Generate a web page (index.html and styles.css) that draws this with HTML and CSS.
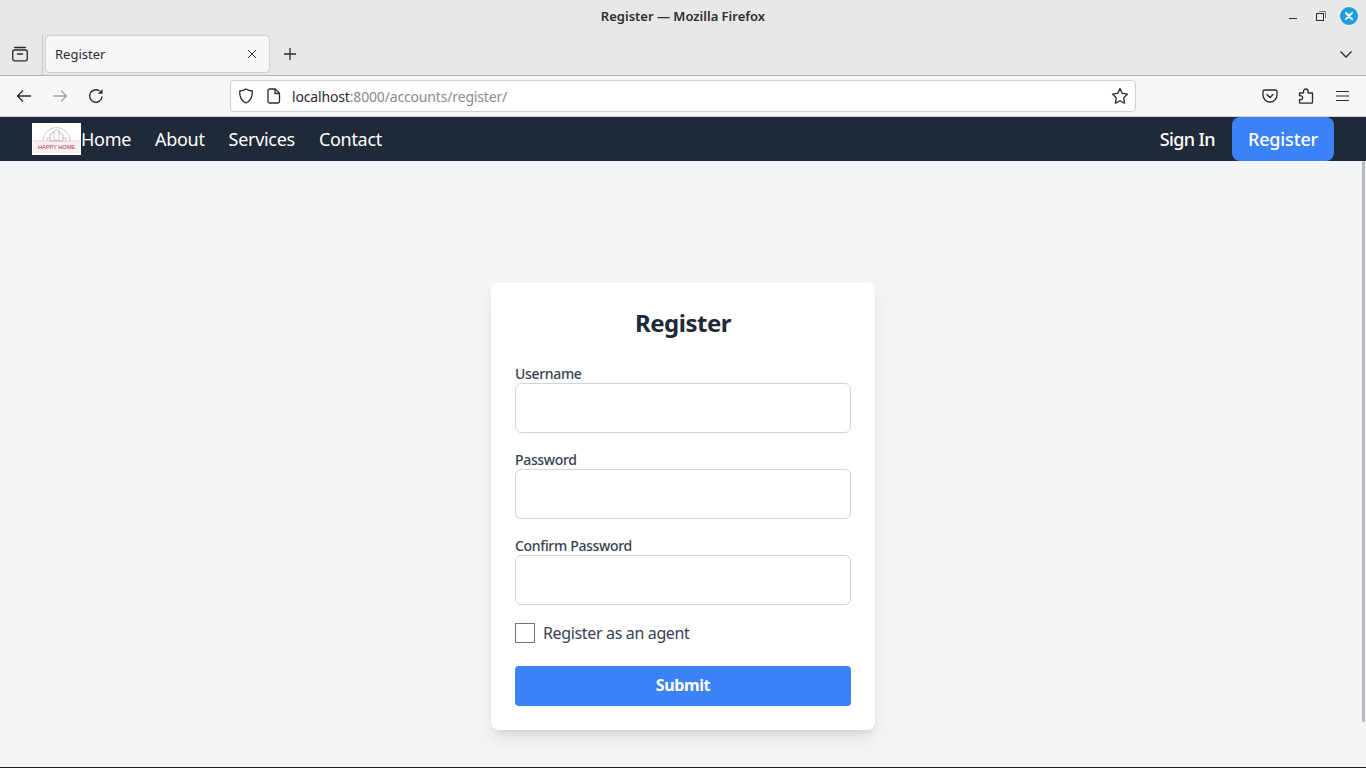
FILE: index.html
```html
<!DOCTYPE html>
<html lang="en">
<head>
<meta charset="utf-8">
<title>Register</title>
<link rel="stylesheet" href="styles.css">
</head>
<body>
<div class="chrome">
  <div class="titlebar">
    <span class="window-title">Register — Mozilla Firefox</span>
    <div class="window-controls">
      <svg class="wc" width="16" height="16" viewBox="0 0 16 16"><path d="M5 10.500h8" stroke="#2b2b2b" stroke-width="1"/></svg>
      <svg class="wc" width="16" height="16" viewBox="0 0 16 16" fill="none"><rect x="4.500" y="5.500" width="7" height="7" stroke="#2b2b2b"/><path d="M7 3.500h6.500v6.500" stroke="#777"/></svg>
      <svg class="wc" width="18" height="18" viewBox="0 0 18 18"><circle cx="9" cy="9" r="9" fill="#1c9fdc"/><path d="M6 6l6 6M12 6l-6 6" stroke="#fff" stroke-width="2" stroke-linecap="round"/></svg>
    </div>
  </div>
  <div class="tabrow">
    <div class="tabs-left">
      <svg width="16" height="16" viewBox="0 0 16 16" fill="none" stroke="#2b2a33" stroke-width="1.300"><rect x="0.700" y="4" width="14.600" height="10.800" rx="2"/><path d="M2.500 1.500h11M5.500 8h5" stroke-linecap="round"/></svg>
    </div>
    <div class="tab">
      <span class="tab-title">Register</span>
      <svg width="10" height="10" viewBox="0 0 10 10"><path d="M1 1l8 8M9 1l-8 8" stroke="#2b2a33" stroke-width="1"/></svg>
    </div>
    <svg class="newtab" width="14" height="14" viewBox="0 0 14 14"><path d="M7 1v12M1 7h12" stroke="#2b2a33" stroke-width="1.300"/></svg>
    <svg class="tabs-down" width="14" height="14" viewBox="0 0 14 14" fill="none"><path d="M1.500 4.500L7 10l5.500-5.500" stroke="#2b2a33" stroke-width="1.300"/></svg>
  </div>
  <div class="toolbar">
    <div class="nav-buttons">
      <svg width="16" height="16" viewBox="0 0 16 16" fill="none" stroke="#2b2a33" stroke-width="1.300"><path d="M15 8H1.500M7 2.500L1.500 8 7 13.500"/></svg>
      <svg width="16" height="16" viewBox="0 0 16 16" fill="none" stroke="#a5a5a9" stroke-width="1.300"><path d="M1 8h13.500M9 2.500L14.500 8 9 13.500"/></svg>
      <svg width="16" height="16" viewBox="0 0 16 16" fill="none" stroke="#2b2a33" stroke-width="1.400"><path d="M14 8.500A6.200 6.200 0 1 1 11.500 3"/><path d="M14.500 1v4.700H9.800" fill="#2b2a33" stroke="none"/></svg>
    </div>
    <div class="urlbar">
      <svg width="16" height="16" viewBox="0 0 16 16" fill="none" stroke="#2b2a33" stroke-width="1.300"><path d="M8 1c2 1.300 4 1.900 6.300 2 .3 5.500-1.600 9.800-6.300 12C3.300 12.800 1.400 8.500 1.700 3 4 2.900 6 2.300 8 1z"/></svg>
      <svg class="page-icon" width="14" height="16" viewBox="0 0 14 16" fill="none" stroke="#2b2a33" stroke-width="1.300"><path d="M2.800 1h5.400L12.500 5.300v7.900A1.800 1.800 0 0 1 10.700 15H2.800A1.800 1.800 0 0 1 1 13.200V2.800A1.800 1.800 0 0 1 2.800 1z"/><path d="M8 1v4.500h4.500"/></svg>
      <span class="url"><span class="url-host">localhost</span>:8000/accounts/register/</span>
      <svg class="star" width="18" height="18" viewBox="0 0 18 18" fill="none" stroke="#2b2a33" stroke-width="1.300" stroke-linejoin="round"><path d="M9 1.500l2.300 4.900 5.200.7-3.800 3.700.9 5.400L9 13.700l-4.600 2.500.9-5.400L1.500 7.100l5.200-.7z"/></svg>
    </div>
    <div class="tool-actions">
      <svg width="16" height="16" viewBox="0 0 16 16" fill="none" stroke="#2b2a33" stroke-width="1.300"><path d="M2.500 2h11A1.500 1.500 0 0 1 15 3.500V7a7 7 0 0 1-14 0V3.500A1.500 1.500 0 0 1 2.500 2z"/><path d="M5 6.500l3 3 3-3" stroke-linecap="round"/></svg>
      <svg width="16" height="16" viewBox="0 0 16 16" fill="none" stroke="#2b2a33" stroke-width="1.300" stroke-linejoin="round"><path d="M1.500 5h3.300C5.800 5 5.500 4.200 5.500 3.300a2.300 2.300 0 0 1 4.600 0c0 .9-.4 1.700.6 1.700h3.800v9.300a.9.900 0 0 1-.9.900H2.400a.9.900 0 0 1-.9-.9v-2.800c1.700.5 3.200-.2 3.200-1.700S3.200 7.300 1.500 7.900z"/></svg>
      <svg width="16" height="16" viewBox="0 0 16 16" stroke="#2b2a33" stroke-width="1.200"><path d="M2 3.500h13M2 8h13M2 12.500h13"/></svg>
    </div>
  </div>
</div>
<div class="page">
  <nav class="site-nav">
    <div class="logo">
      <svg width="49" height="32" viewBox="0 0 49 32" fill="none">
        <rect x="1" y="18" width="47" height="12" fill="#f7eff1"/>
        <path d="M11 18a13.500 13.500 0 0 1 27 0" stroke="#c9a9b0" stroke-width="0.700"/>
        <path d="M18 18v-6l6.500-5.500L31 12v6z" stroke="#b99ca6" stroke-width="0.800"/>
        <path d="M22 8v9h5V8M15 18v-3h4M30 15h4v3" stroke="#cdb4ba" stroke-width="0.800"/>
        <path d="M1 18h47" stroke="#d9b9c0" stroke-width="0.600"/>
      </svg>
      <span class="logo-text">HAPPY HOME</span>
    </div>
    <div class="nav-links">
      <a class="nav-link">Home</a>
      <a class="nav-link">About</a>
      <a class="nav-link">Services</a>
      <a class="nav-link">Contact</a>
    </div>
    <div class="nav-auth">
      <a class="sign-in">Sign In</a>
      <a class="register-btn">Register</a>
    </div>
  </nav>
  <main class="main">
    <form class="card">
      <h1 class="card-title">Register</h1>
      <div class="field">
        <label class="field-label">Username</label>
        <input class="field-input" type="text">
      </div>
      <div class="field">
        <label class="field-label">Password</label>
        <input class="field-input" type="password">
      </div>
      <div class="field">
        <label class="field-label">Confirm Password</label>
        <input class="field-input" type="password">
      </div>
      <div class="check-row">
        <span class="check-box"></span>
        <span class="check-label">Register as an agent</span>
      </div>
      <button class="submit" type="button">Submit</button>
    </form>
  </main>
  <div class="scrollbar"></div>
</div>
</body>
</html>
```
FILE: styles.css
```css
* { box-sizing: border-box; }
html, body { margin: 0; padding: 0; height: 100%; overflow: hidden; }
body {
  width: 1366px;
  height: 768px;
  font-family: "Noto Sans", sans-serif;
  background: #f3f4f6;
  display: flex;
  flex-direction: column;
  border-bottom: 1px solid #1f1f1f;
}
svg { display: block; flex: none; }

.chrome { flex: none; }
.titlebar {
  height: 33px;
  background: #e8e8e8;
  position: relative;
  display: flex;
  align-items: center;
  justify-content: center;
  padding-bottom: 2px;
}
.window-title { font-size: 13px; font-weight: 600; color: #2d2d2d; }
.window-controls {
  position: absolute;
  right: 8px;
  top: 7px;
  display: flex;
  align-items: center;
  gap: 12px;
}
.tabrow {
  height: 43px;
  background: #e8e8e8;
  border-bottom: 1px solid #b5b5b5;
  display: flex;
  align-items: center;
}
.tabs-left {
  width: 43px;
  height: 100%;
  padding-left: 12px;
  border-right: 1px solid #c8c8c8;
  display: flex;
  align-items: center;
}
.tab {
  width: 223px;
  height: 36px;
  margin-left: 3px;
  padding: 0 12px 0 9px;
  background: #f7f7f7;
  border-radius: 4px;
  box-shadow: 0 0 2px rgba(0, 0, 0, 0.35);
  display: flex;
  align-items: center;
  justify-content: space-between;
}
.tab-title { font-size: 13px; color: #2b2a33; }
.newtab { margin-left: 14px; }
.tabs-down { margin: 0 13px 0 auto; }

.toolbar {
  height: 41px;
  background: #f7f7f7;
  border-bottom: 1px solid #cfcfd3;
  display: flex;
  align-items: center;
}
.nav-buttons {
  width: 230px;
  padding-left: 16px;
  display: flex;
  gap: 20px;
}
.urlbar {
  width: 906px;
  height: 32px;
  background: #fff;
  border: 1px solid #cfcfd8;
  border-radius: 4px;
  padding: 0 6px 0 7px;
  display: flex;
  align-items: center;
}
.page-icon { margin-left: 13px; }
.url { margin-left: 11px; font-size: 14px; letter-spacing: -0.16px; color: #8a8a8f; flex: 1; }
.url-host { color: #2b2a33; }
.tool-actions {
  margin-left: 126px;
  display: flex;
  gap: 20px;
}

.page { flex: 1; position: relative; display: flex; flex-direction: column; min-height: 0; }
.site-nav {
  height: 44px;
  flex: none;
  background: #1f2937;
  padding: 0 32px;
  display: flex;
  align-items: center;
}
.logo {
  width: 49px;
  height: 32px;
  background: #fff;
  position: relative;
}
.logo-text {
  position: absolute;
  left: 0;
  right: 0;
  top: 21px;
  text-align: center;
  font-size: 5.600px;
  line-height: 7px;
  color: #b3394f;
  font-family: "Liberation Sans", sans-serif;
}
.nav-links { display: flex; gap: 24px; }
.nav-link { font-size: 18px; letter-spacing: -0.3px; color: #fff; }
.nav-auth { margin-left: auto; display: flex; align-items: center; gap: 17px; }
.sign-in { font-size: 18px; font-weight: 500; letter-spacing: -0.6px; color: #fff; }
.register-btn {
  width: 102px;
  height: 44px;
  background: #3b82f6;
  border-radius: 8px;
  font-size: 18px;
  font-weight: 500;
  letter-spacing: -0.15px;
  color: #fff;
  display: flex;
  align-items: center;
  justify-content: center;
}
.main { flex: 1; padding-top: 122px; display: flex; justify-content: center; align-items: flex-start; }
.card {
  width: 384px;
  height: 447px;
  background: #fff;
  border-radius: 8px;
  padding: 24px;
  box-shadow: 0 10px 15px -3px rgba(0, 0, 0, 0.1), 0 4px 6px -4px rgba(0, 0, 0, 0.1);
}
.card-title {
  margin: 0 0 24px;
  font-size: 24px;
  line-height: 32px;
  font-weight: 700;
  letter-spacing: -0.5px;
  color: #1f2937;
  text-align: center;
}
.field { margin-bottom: 16px; }
.field-label { display: block; height: 20px; font-size: 14px; line-height: 22px; font-weight: 500; letter-spacing: -0.33px; color: #374151; }
.field-input {
  display: block;
  width: 100%;
  height: 50px;
  background: #fff;
  border: 1px solid #d1d5db;
  border-radius: 6px;
  outline: none;
}
.check-row { display: flex; align-items: center; height: 20px; margin: 18px 0 23px; }
.check-box { width: 20px; height: 20px; border: 1px solid #6b7280; background: #fff; }
.check-label { margin-left: 8px; font-size: 16px; letter-spacing: -0.35px; color: #374151; }
.submit {
  display: block;
  width: 100%;
  height: 40px;
  padding: 0 0 2px;
  background: #3b82f6;
  border: 0;
  border-radius: 4px;
  font-family: inherit;
  font-size: 16px;
  font-weight: 700;
  letter-spacing: -0.4px;
  color: #fff;
}
.scrollbar {
  position: absolute;
  right: 1px;
  top: 44px;
  width: 3px;
  height: 561px;
  background: #b9b9bd;
  border-radius: 2px;
}
```
